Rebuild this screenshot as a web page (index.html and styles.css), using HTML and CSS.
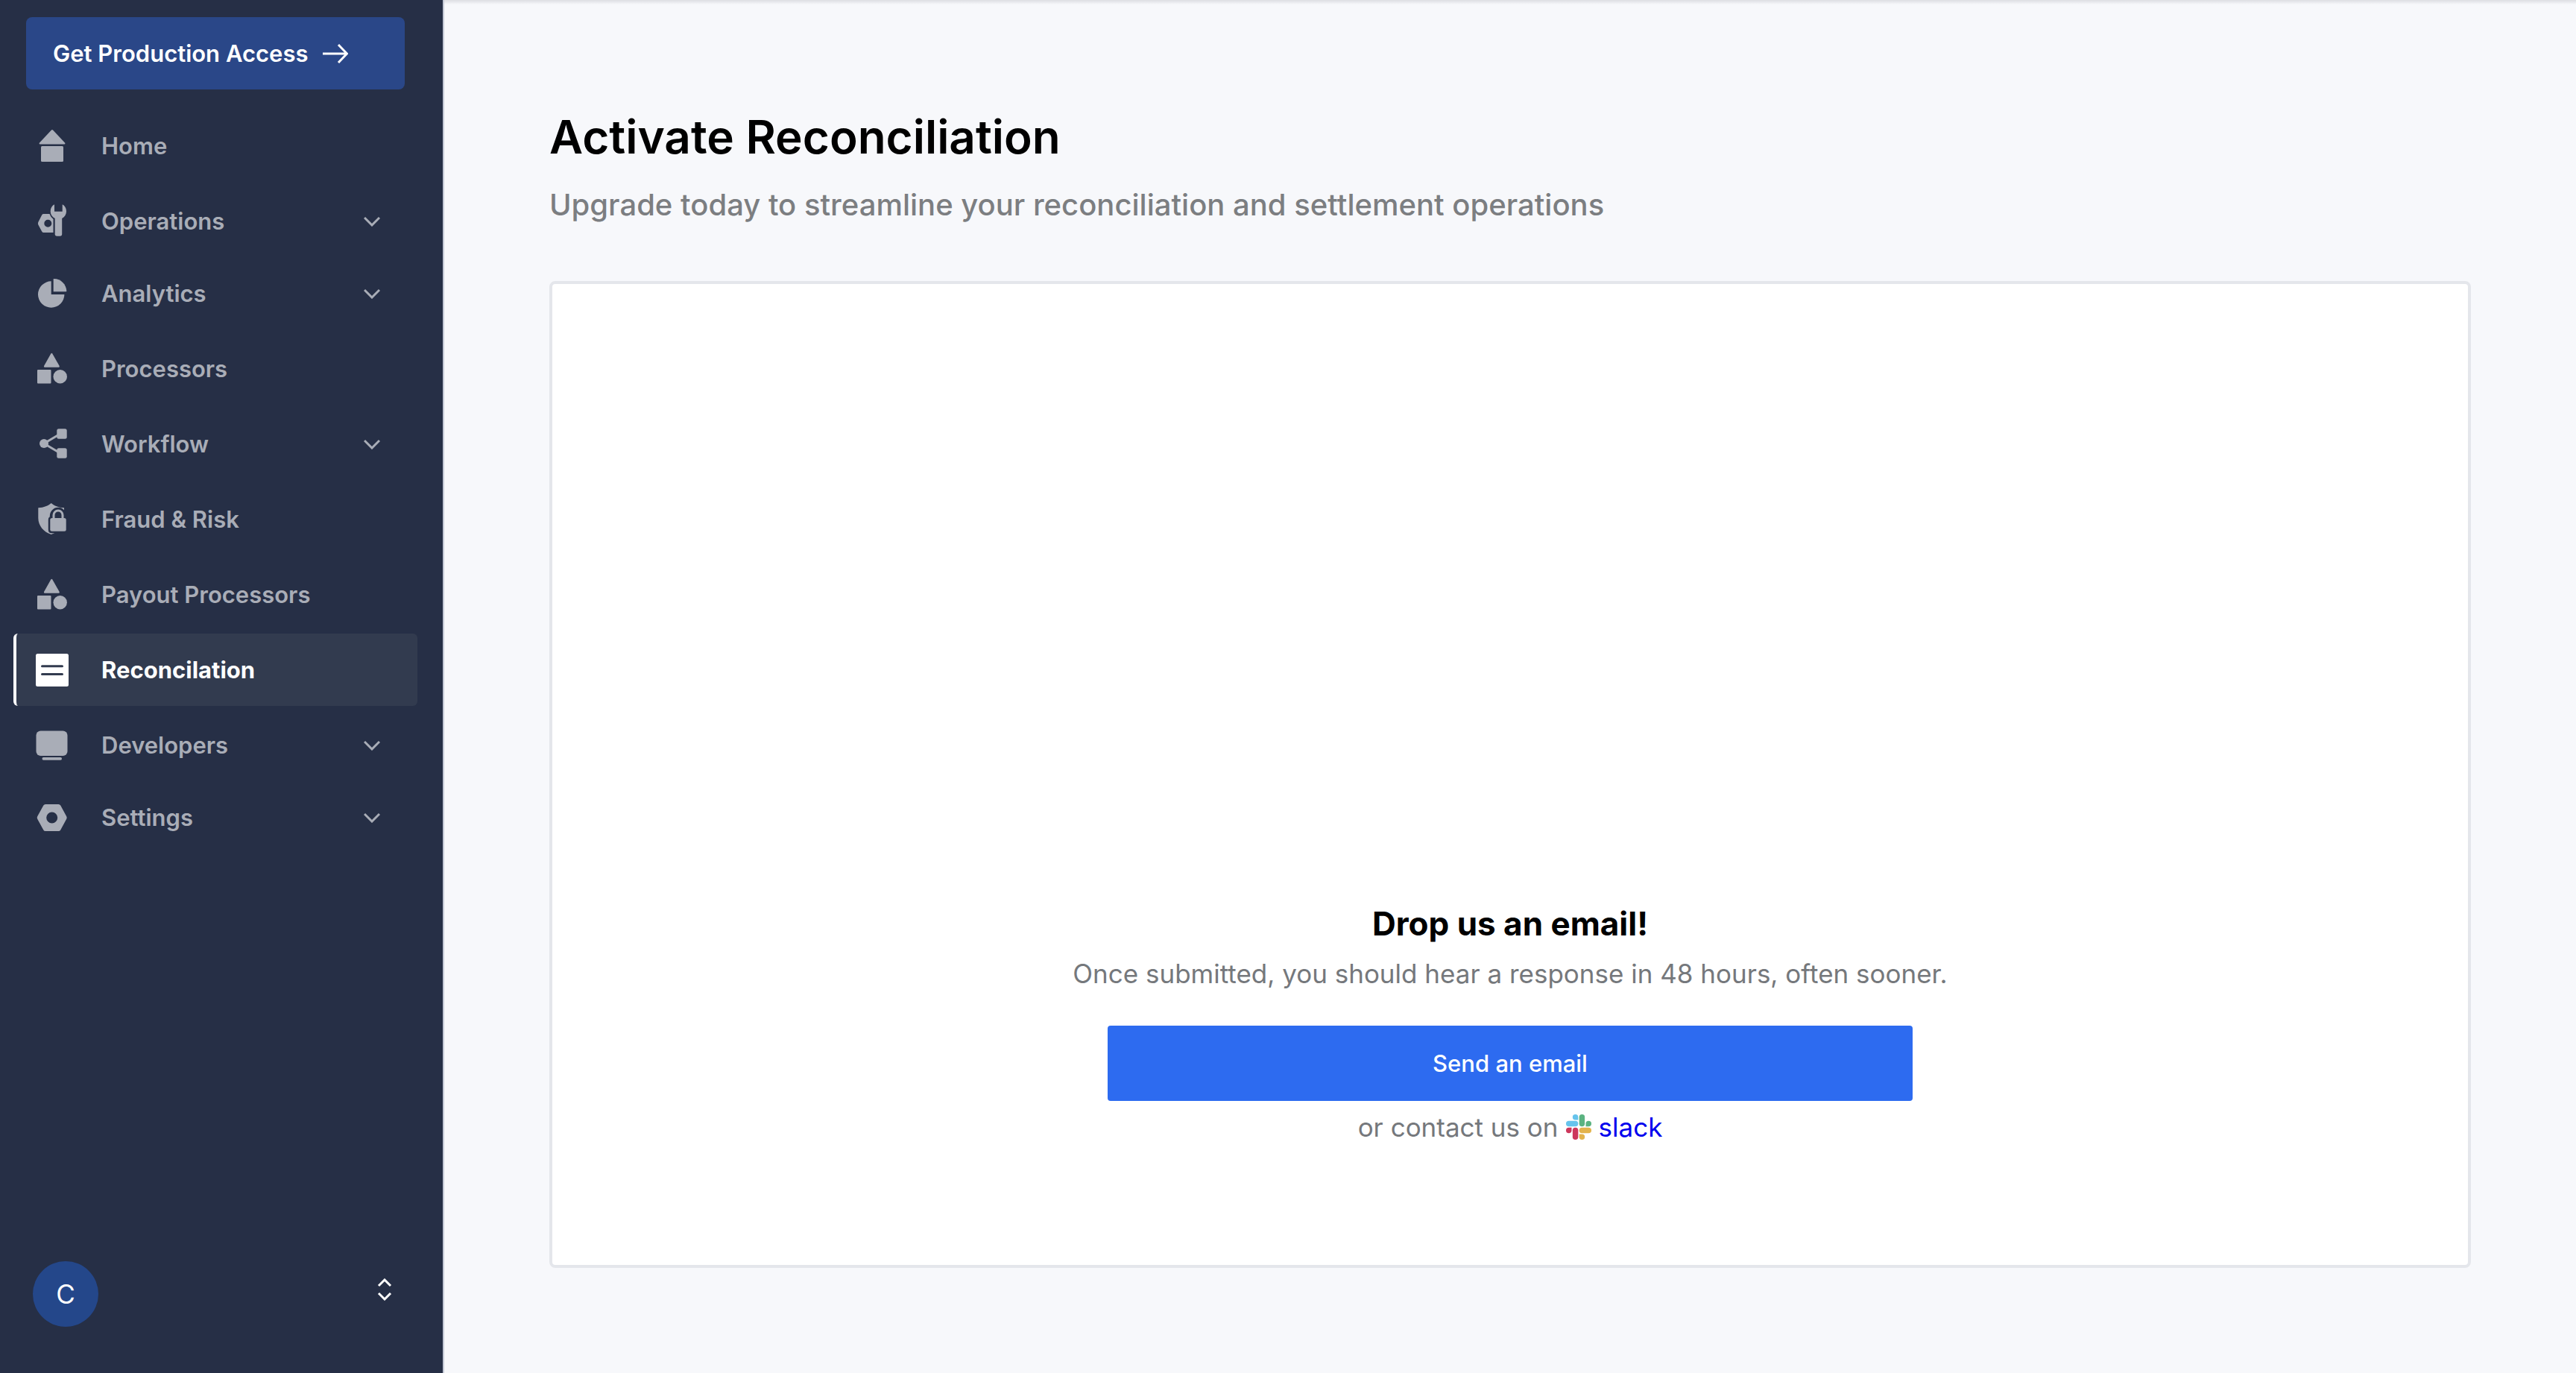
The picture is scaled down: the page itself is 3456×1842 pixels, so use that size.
FILE: index.html
```html
<!DOCTYPE html>
<html lang="en">
<head>
<meta charset="utf-8">
<title>Activate Reconciliation</title>
<link rel="stylesheet" href="styles.css">
</head>
<body>
<div class="app">
  <aside class="sidebar">
    <button class="cta" type="button">
      Get Production Access
      <svg class="cta-arrow" viewBox="0 0 34 30" aria-hidden="true"><path d="M0 15H32M21 3L32.500 15L21 27"/></svg>
    </button>
    <nav class="nav">
      <a class="nav-item" href="#home">
        <svg class="icon" viewBox="0 0 48 49" aria-hidden="true">
          <path d="M23 3.500Q24 2.500 25 3.500L41.200 20.800Q42 22.500 40.500 22.500H7.500Q6 22.500 6.800 20.800Z"/>
          <rect x="9" y="25" width="30" height="21" rx="1.500"/>
        </svg>
        <span class="label">Home</span>
      </a>
      <button class="nav-item expandable" type="button">
        <svg class="icon" viewBox="0 0 48 49" aria-hidden="true">
          <path fill-rule="evenodd" d="M12.500 15H20.500Q22 19.500 25.500 22V40H12.500Q11 40 10.300 38.800L5.300 29.500Q4.600 27.700 5.300 26L10.300 16.200Q11 15 12.500 15ZM18.300 22.700A5 5 0 1 0 18.300 32.700A5 5 0 1 0 18.300 22.700Z"/>
          <path d="M27 2.300V11.700H37.700V2.300C41 4 43 7.500 43 11.500C43 15.500 41 18.800 37.200 21V42Q37.200 44.700 34.500 44.700H30.400Q27.700 44.700 27.700 42V21C23.700 19 21.700 15.500 21.700 11.500C21.700 7.500 23.700 4 27 2.300Z"/>
        </svg>
        <span class="label">Operations</span>
        <svg class="chevron" viewBox="0 0 22 14" aria-hidden="true"><path d="M1 2L11 12L21 2"/></svg>
      </button>
      <button class="nav-item expandable" type="button">
        <svg class="icon" viewBox="0 0 48 49" aria-hidden="true">
          <path d="M22.700 8.300A17.700 17.700 0 1 0 40.400 26H22.700Z"/>
          <path d="M25.700 5.500Q25.700 5 26.500 5C35.500 5 43 12.500 43.300 21.500Q43.300 22.300 42.500 22.300H25.700Z"/>
        </svg>
        <span class="label">Analytics</span>
        <svg class="chevron" viewBox="0 0 22 14" aria-hidden="true"><path d="M1 2L11 12L21 2"/></svg>
      </button>
      <a class="nav-item" href="#processors">
        <svg class="icon" viewBox="0 0 48 49" aria-hidden="true">
          <path d="M22.300 4.500Q23.300 3 24.300 4.500L33.700 21Q34.300 22.700 32.800 22.700H14Q12.300 22.700 13 21Z"/>
          <rect x="4" y="26" width="18.500" height="18.500" rx="1"/>
          <circle cx="34.700" cy="35.200" r="9.200"/>
        </svg>
        <span class="label">Processors</span>
      </a>
      <button class="nav-item expandable" type="button">
        <svg class="icon" viewBox="0 0 48 49" aria-hidden="true">
          <path class="line" d="M34 11.500L13 24L34 36.500"/>
          <circle cx="13" cy="24" r="6"/>
          <rect x="30.300" y="4.300" width="13.400" height="13.400" rx="2.500"/>
          <rect x="30.300" y="30.300" width="13.400" height="13.400" rx="2.500"/>
        </svg>
        <span class="label">Workflow</span>
        <svg class="chevron" viewBox="0 0 22 14" aria-hidden="true"><path d="M1 2L11 12L21 2"/></svg>
      </button>
      <a class="nav-item" href="#fraud">
        <svg class="icon" viewBox="0 0 48 49" aria-hidden="true">
          <path d="M22.700 3C27 6.500 32 9 40 9.200V23C40 33 33 42 22.700 45C12.500 42 5.300 33 5.300 23V9.200C13 9 18.500 6.500 22.700 3Z"/>
          <path class="cutout" d="M23.300 23.300V20.500A8.700 9.200 0 0 1 40.700 20.500V23.300Q42.700 23.300 42.700 25.300V38.700Q42.700 40.700 40.700 40.700H23.300Q21.300 40.700 21.300 38.700V25.300Q21.300 23.300 23.300 23.300Z"/>
          <path class="line" d="M26 25V19A6 6 0 0 1 38 19V25"/>
          <rect x="21.300" y="23" width="21.400" height="17.700" rx="2.500"/>
        </svg>
        <span class="label">Fraud &amp; Risk</span>
      </a>
      <a class="nav-item" href="#payout-processors">
        <svg class="icon" viewBox="0 0 48 49" aria-hidden="true">
          <path d="M22.300 4.500Q23.300 3 24.300 4.500L33.700 21Q34.300 22.700 32.800 22.700H14Q12.300 22.700 13 21Z"/>
          <rect x="4" y="26" width="18.500" height="18.500" rx="1"/>
          <circle cx="34.700" cy="35.200" r="9.200"/>
        </svg>
        <span class="label">Payout Processors</span>
      </a>
      <a class="nav-item active" href="#reconciliation" aria-current="page">
        <svg class="icon" viewBox="0 0 48 49" aria-hidden="true">
          <rect x="2" y="3" width="44" height="44" rx="2.500"/>
          <path class="rule" d="M10.500 19.700H37.500M10.500 30.500H37.500"/>
        </svg>
        <span class="label">Reconcilation</span>
      </a>
      <button class="nav-item expandable" type="button">
        <svg class="icon" viewBox="0 0 48 49" aria-hidden="true">
          <rect x="2.500" y="5.500" width="42" height="33.500" rx="6"/>
          <rect x="10.500" y="41" width="26.500" height="3.700" rx="1.800"/>
        </svg>
        <span class="label">Developers</span>
        <svg class="chevron" viewBox="0 0 22 14" aria-hidden="true"><path d="M1 2L11 12L21 2"/></svg>
      </button>
      <button class="nav-item expandable" type="button">
        <svg class="icon" viewBox="0 0 48 49" aria-hidden="true">
          <path fill-rule="evenodd" d="M15 7H32.500Q34.300 7 35.200 8.500L43.200 23.200Q44.200 25 43.200 26.800L35.200 41.500Q34.300 43 32.500 43H15Q13.200 43 12.300 41.500L4.200 26.800Q3.200 25 4.200 23.200L12.300 8.500Q13.200 7 15 7ZM23.700 17.500A7.500 7.500 0 1 0 23.700 32.500A7.500 7.500 0 1 0 23.700 17.500Z"/>
        </svg>
        <span class="label">Settings</span>
        <svg class="chevron" viewBox="0 0 22 14" aria-hidden="true"><path d="M1 2L11 12L21 2"/></svg>
      </button>
    </nav>
    <button class="account" type="button" aria-label="Account menu">
      <span class="avatar">C</span>
      <svg class="sort" viewBox="0 0 20 30" aria-hidden="true"><path d="M2 10L10 2L18 10M2 20L10 28L18 20"/></svg>
    </button>
  </aside>
  <main class="main">
    <h1 class="title">Activate Reconciliation</h1>
    <p class="subtitle">Upgrade today to streamline your reconciliation and settlement operations</p>
    <section class="card">
      <h2 class="card-title">Drop us an email!</h2>
      <p class="card-text">Once submitted, you should hear a response in 48 hours, often sooner.</p>
      <button class="send" type="button">Send an email</button>
      <p class="contact">
        <span>or contact us on</span>
        <svg class="slack-icon" viewBox="0 0 100 100" aria-hidden="true">
          <path fill="#66c3ec" d="M48 22H37A11 11 0 1 1 48 11Z"/>
          <rect fill="#66c3ec" x="0" y="26" width="48" height="22" rx="11"/>
          <rect fill="#5bb381" x="52" y="0" width="22" height="48" rx="11"/>
          <path fill="#5bb381" d="M78 48V37A11 11 0 1 1 89 48Z"/>
          <path fill="#cd375c" d="M22 52V63A11 11 0 1 1 11 52Z"/>
          <rect fill="#cd375c" x="26" y="52" width="22" height="48" rx="11"/>
          <rect fill="#e3b34c" x="52" y="52" width="48" height="22" rx="11"/>
          <path fill="#e3b34c" d="M52 78H63A11 11 0 1 1 52 89Z"/>
        </svg>
        <a class="slack" href="#slack">slack</a>
      </p>
    </section>
  </main>
</div>
</body>
</html>
```
FILE: styles.css
```css
* {
  box-sizing: border-box;
  margin: 0;
}

body {
  font-family: Inter, "Liberation Sans", sans-serif;
  color: #000;
  background: #f7f8fb;
}

button {
  font: inherit;
  border: 0;
  background: none;
  color: inherit;
  cursor: pointer;
}

a {
  text-decoration: none;
}

.app {
  display: flex;
  min-height: 100vh;
}

/* Sidebar */
.sidebar {
  display: flex;
  flex-direction: column;
  flex: none;
  width: 596px;
  padding: 23px 34px 62px 18px;
  background: #262f46;
  border-right: 2px solid #c4c9d6;
  color: #a9adb7;
}

.cta {
  display: flex;
  align-items: center;
  gap: 20px;
  height: 97px;
  margin: 0 17px 27px;
  padding: 0 36px;
  border-radius: 8px;
  background: #2a4788;
  color: #fff;
  font-size: 31px;
  font-weight: 600;
}

.cta-arrow {
  width: 34px;
  height: 30px;
  fill: none;
  stroke: currentColor;
  stroke-width: 3;
}

.nav {
  display: flex;
  flex-direction: column;
}

.nav-item {
  display: flex;
  align-items: center;
  height: 97px;
  padding: 0 50px 0 28px;
  border-radius: 6px;
  color: inherit;
  font-size: 31px;
  font-weight: 600;
  text-align: left;
}

.nav-item + .nav-item {
  margin-top: 4px;
}

.expandable + .expandable {
  margin-top: 0;
}

.nav-item.active {
  padding-left: 24px;
  background: #323b4f;
  border-left: 4px solid #fff;
  color: #fff;
  font-weight: 700;
}

.icon {
  width: 48px;
  height: 49px;
  margin-right: 42px;
  fill: currentColor;
}

.icon .line {
  fill: none;
  stroke: currentColor;
  stroke-width: 3;
}

.icon .cutout {
  fill: #262f46;
  stroke: #262f46;
  stroke-width: 5;
}

.icon .rule {
  fill: none;
  stroke: #323b4f;
  stroke-width: 3;
  stroke-linecap: round;
}

.label {
  flex: 1;
}

.chevron {
  width: 22px;
  height: 14px;
  fill: none;
  stroke: currentColor;
  stroke-width: 3;
}

.account {
  display: flex;
  align-items: center;
  justify-content: space-between;
  margin-top: auto;
  padding: 0 34px 0 26px;
  color: #fff;
}

.avatar {
  display: grid;
  place-items: center;
  width: 88px;
  height: 88px;
  border-radius: 50%;
  background: #24478a;
  font-size: 35px;
}

.sort {
  width: 20px;
  height: 30px;
  margin-bottom: 12px;
  fill: none;
  stroke: currentColor;
  stroke-width: 3;
}

/* Main area */
.main {
  display: flex;
  flex-direction: column;
  flex: 1;
  padding: 144px 141px 141px;
  background: linear-gradient(#dddee2, #f7f8fb 6px);
}

.title {
  font-size: 62px;
  line-height: 80px;
  font-weight: 600;
}

.subtitle {
  margin-top: 23px;
  font-size: 40px;
  line-height: 56px;
  font-weight: 500;
  color: #7c7e81;
}

.card {
  display: flex;
  flex: 1;
  flex-direction: column;
  align-items: center;
  justify-content: flex-end;
  margin-top: 74px;
  padding: 163px 24px;
  background: #fff;
  border: 4px solid #e4e6eb;
  border-radius: 8px;
}

.card-title {
  font-size: 44px;
  line-height: 56px;
  font-weight: 700;
}

.card-text,
.contact {
  font-size: 35px;
  line-height: 44px;
  color: #75787c;
}

.card-text {
  margin: 17px 0 48px;
}

.send {
  width: 1080px;
  max-width: 100%;
  height: 101px;
  border-radius: 4px;
  background: #2d6bf0;
  color: #fff;
  font-size: 31px;
  font-weight: 500;
}

.contact {
  display: flex;
  align-items: center;
  gap: 10px;
  margin-top: 13px;
}

.slack {
  color: #00e;
}

.slack-icon {
  width: 34px;
  height: 34px;
}
```
